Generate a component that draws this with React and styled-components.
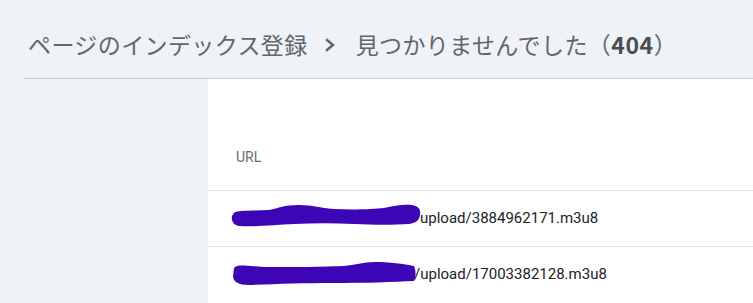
import React from "react";
import styled, { createGlobalStyle } from "styled-components";

const Global = createGlobalStyle`
  html, body { margin: 0; padding: 0; }
  body {
    background: #eff2f7;
    font-family: Roboto, "Noto Sans", "Noto Sans CJK JP", sans-serif;
    overflow: hidden;
  }
`;

const Page = styled.div`
  width: 753px;
  height: 303px;
  display: flex;
  flex-direction: column;
  background: #eff2f7;
`;

const Header = styled.header`
  height: 80px;
  margin-left: 24px;
  padding-left: 4px;
  border-bottom: 1px solid #c6c9cd;
  display: flex;
  align-items: center;
  padding-top: 9px;
  box-sizing: border-box;
  font-family: "Noto Sans CJK JP", sans-serif;
  font-size: 23px;
  color: #62666a;
  white-space: nowrap;
`;

const Crumb = styled.span`
  letter-spacing: 0.4px;
`;

const Strong = styled.b`
  font-weight: 700;
  color: #4a4e52;
  letter-spacing: 0.6px;
`;

const Chevron = styled.svg`
  width: 12px;
  height: 14px;
  margin: 2px 20px 0 16px;
  flex: none;
`;

const Body = styled.div`
  flex: 1;
  display: flex;
`;

const Side = styled.div`
  width: 208px;
  flex: none;
`;

const Panel = styled.section`
  flex: 1;
  background: #ffffff;
  display: flex;
  flex-direction: column;
`;

const HeadCell = styled.div`
  height: 112px;
  box-sizing: border-box;
  padding: 0 0 25px 28px;
  display: flex;
  align-items: flex-end;
  font-size: 14px;
  color: #6a6d71;
  border-bottom: 1px solid #e3e3e3;
`;

const Row = styled.div`
  height: 56px;
  box-sizing: border-box;
  padding-left: 28px;
  padding-bottom: 2px;
  display: flex;
  align-items: center;
  font-size: 15px;
  color: #202124;
  border-bottom: ${(p) => (p.$last ? "none" : "1px solid #e3e3e3")};
`;

const Redaction = styled.span`
  position: relative;
  display: inline-block;
  flex: none;
  width: ${(p) => p.$w}px;
  height: 20px;
`;

const Scribble = styled.svg`
  position: absolute;
  left: -12px;
  top: -8px;
  width: 212px;
  height: 34px;
  pointer-events: none;
`;

const INK = "#3c06b6";

const rows = [
  {
    hiddenW: 184,
    tail: "upload/3884962171.m3u8",
    d: "M10 13 C12 10 30 11 45 10 C55 8 60 5 75 5 C90 5 95 8 110 9 C130 10 150 9 160 8 C170 6 178 4 188 5 C194 6 197 9 196 14 C196 20 192 23 185 24 C170 25 150 25 130 24 C110 23 90 23 70 24 C50 25 30 27 15 26 C9 25 7 20 8 16 Z",
  },
  {
    hiddenW: 178,
    tail: "/upload/17003382128.m3u8",
    d: "M10 12 C14 8 20 10 40 11 C70 11 100 11 120 10 C130 9 140 6 150 6 C165 6 180 8 190 10 C192 14 192 22 190 25 C170 26 140 27 110 27 C80 27 50 28 25 29 C15 29 9 26 9 20 Z",
  },
];

function Breadcrumb() {
  return (
    <Header>
      <Crumb>ページのインデックス登録</Crumb>
      <Chevron viewBox="0 0 12 14">
        <polyline
          points="3,2 9,7 3,12"
          fill="none"
          stroke="#5f6368"
          strokeWidth="2.4"
          strokeLinecap="square"
        />
      </Chevron>
      <Crumb>
        見つかりませんでした（<Strong>404</Strong>）
      </Crumb>
    </Header>
  );
}

export default function App() {
  return (
    <>
      <Global />
      <Page>
        <Breadcrumb />
        <Body>
          <Side />
          <Panel>
            <HeadCell>URL</HeadCell>
            {rows.map((r, i) => (
              <Row key={i} $last={i === rows.length - 1}>
                <Redaction $w={r.hiddenW} aria-label="redacted">
                  <Scribble viewBox="0 0 212 34">
                    <path d={r.d} fill={INK} />
                  </Scribble>
                </Redaction>
                <span>{r.tail}</span>
              </Row>
            ))}
          </Panel>
        </Body>
      </Page>
    </>
  );
}
